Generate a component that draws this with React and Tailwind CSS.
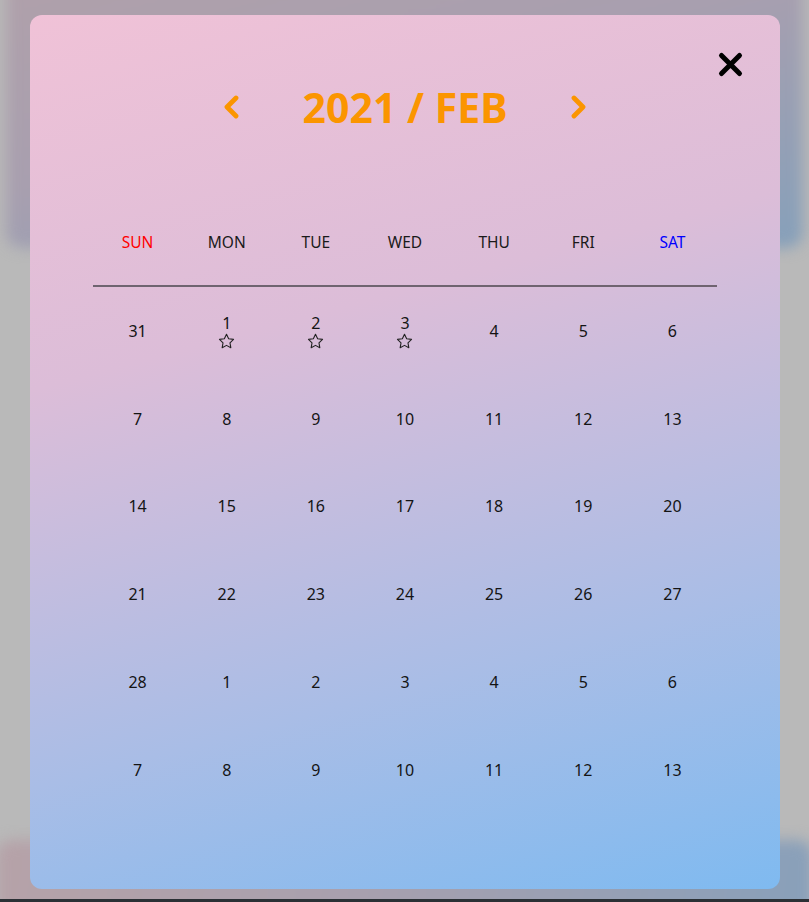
import React from "react";

const rows = [
  [{ d: 31 }, { d: 1, star: true }, { d: 2, star: true }, { d: 3, star: true }, { d: 4 }, { d: 5 }, { d: 6 }],
  [7, 8, 9, 10, 11, 12, 13].map((d) => ({ d })),
  [14, 15, 16, 17, 18, 19, 20].map((d) => ({ d })),
  [21, 22, 23, 24, 25, 26, 27].map((d) => ({ d })),
  [28, 1, 2, 3, 4, 5, 6].map((d) => ({ d })),
  [7, 8, 9, 10, 11, 12, 13].map((d) => ({ d })),
];

const days = ["SUN", "MON", "TUE", "WED", "THU", "FRI", "SAT"];

function Star() {
  return (
    <svg width="17" height="16" viewBox="0 0 24 23" fill="none" stroke="#222" strokeWidth="1.6" strokeLinejoin="round">
      <path d="M12 1.8l3.1 6.4 7 1-5.1 4.9 1.2 7-6.2-3.3-6.2 3.3 1.2-7-5.1-4.9 7-1z" />
    </svg>
  );
}

export default function App() {
  return (
    <div
      className="relative h-[902px] w-full overflow-hidden bg-[#b9b9b9]"
      style={{ fontFamily: '"Noto Sans", "Open Sans", sans-serif' }}
    >
      {/* blurred page behind */}
      <div className="flex h-full flex-col blur-[7px]">
        <div className="mx-[6px] -mt-[30px] h-[278px] rounded-[16px] bg-[linear-gradient(165deg,#b0a0aa_0%,#a89faf_45%,#86a0ba_100%)]" />
        <div className="flex-1" />
        <div className="-mx-[4px] -mb-[30px] h-[92px] rounded-[16px] bg-[linear-gradient(100deg,#b6a2a8_0%,#a8a0ae_45%,#88a0ba_100%)]" />
      </div>
      <div className="absolute bottom-0 left-0 h-[3px] w-full bg-[#2b3035]" />

      {/* modal */}
      <div className="absolute left-[30px] top-[15px] h-[874px] w-[750px] rounded-[12px] bg-[linear-gradient(165deg,#f0c2d7_0%,#dcbdd8_35%,#a9bde6_72%,#7fbaf0_100%)] px-[63px] pt-[36px]">
        <div className="-mr-[27px] flex h-[27px] justify-end">
          <svg width="27" height="27" viewBox="0 0 27 27">
            <path d="M4.5 4.5L22.5 22.5M22.5 4.5L4.5 22.5" stroke="#000" strokeWidth="5" strokeLinecap="round" />
          </svg>
        </div>
        <div className="mt-[5px] flex h-[48px] items-center justify-center gap-[63px]">
          <svg width="18" height="24" viewBox="0 0 18 24">
            <path d="M14 3L5 12L14 21" fill="none" stroke="#fb9500" strokeWidth="4.8" strokeLinecap="round" strokeLinejoin="round" />
          </svg>
          <div className="text-[41px] font-bold leading-[48px] text-[#fb9500]">2021 / FEB</div>
          <svg width="18" height="24" viewBox="0 0 18 24">
            <path d="M4 3L13 12L4 21" fill="none" stroke="#fb9500" strokeWidth="4.8" strokeLinecap="round" strokeLinejoin="round" />
          </svg>
        </div>

        <div className="mt-[70px] grid h-[86px] grid-cols-7 items-center border-b-2 border-[#6f6470]">
          {days.map((d, i) => (
            <div
              key={d}
              className={
                "text-center text-[15.5px] " +
                (i === 0 ? "text-[#ff0000]" : i === 6 ? "text-[#0000ff]" : "text-[#1a1a1a]")
              }
            >
              {d}
            </div>
          ))}
        </div>

        {rows.map((r, ri) => (
          <div key={ri} className="grid h-[87.8px] grid-cols-7 items-center">
            {r.map((c, ci) => (
              <div key={ci} className="flex flex-col items-center text-[16px] leading-[20px] text-[#141414]">
                <span>{c.d}</span>
                {c.star && <Star />}
              </div>
            ))}
          </div>
        ))}
      </div>
    </div>
  );
}
